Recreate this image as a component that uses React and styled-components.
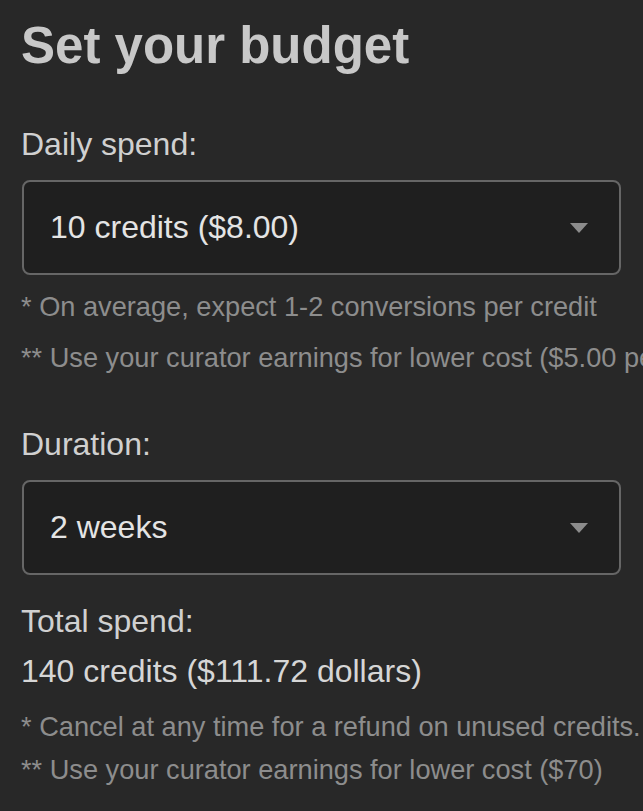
import React from "react"
import styled, { createGlobalStyle } from 'styled-components'

const GlobalStyle = createGlobalStyle`
  html, body {
    margin: 0;
    padding: 0;
    background: #282828;
    overflow-x: hidden;
  }
  body {
    font-family: "Liberation Sans", Arial, sans-serif;
  }
`

const Page = styled.div`
  padding: 16px 22px 30px 21px;
  min-height: 811px;
  box-sizing: border-box;
  background: #282828;
  overflow: hidden;
`

const Title = styled.h1`
  margin: 0 0 48px;
  font-size: 51px;
  line-height: 60px;
  font-weight: 700;
  color: #c8c8c8;
  white-space: nowrap;
`

const Label = styled.div`
  font-size: 32px;
  line-height: 40px;
  color: #d0d0d0;
  white-space: nowrap;
  margin-top: ${props => props.gap || 0}px;
`

const SelectBox = styled.div`
  display: flex;
  align-items: center;
  justify-content: space-between;
  height: 95px;
  box-sizing: border-box;
  margin: 16px 0 0 1px;
  padding: 0 30px 0 26px;
  border: 2px solid #666;
  border-radius: 8px;
  background: #1f1f1f;
  color: #e4e4e4;
  font-size: 32px;
  cursor: pointer;
`

const Caret = styled.svg`
  width: 20px;
  height: 10px;
  flex: none;
`

const Note = styled.div`
  font-size: 27.2px;
  line-height: 36px;
  color: #8d8d8d;
  white-space: nowrap;
  margin-top: ${props => props.gap || 0}px;
`

const Total = styled.div`
  font-size: 32px;
  line-height: 40px;
  color: #d6d6d6;
  white-space: nowrap;
  margin-top: 10px;
`

function Select({ value }) {
  return (
    <SelectBox role="button">
      <span>{value}</span>
      <Caret viewBox="0 0 20 10">
        <path d="M1 0 L19 0 L10 10 Z" fill="#8c8c8c" />
      </Caret>
    </SelectBox>
  )
}

export default function App() {
  return (
    <Page>
      <GlobalStyle />
      <Title>Set your budget</Title>

      <Label>Daily spend:</Label>
      <Select value="10 credits ($8.00)" />
      <Note gap={14}>* On average, expect 1-2 conversions per credit</Note>
      <Note gap={15}>** Use your curator earnings for lower cost ($5.00 per credit)</Note>

      <Label gap={48}>Duration:</Label>
      <Select value="2 weeks" />

      <Label gap={26}>Total spend:</Label>
      <Total>140 credits ($111.72 dollars)</Total>
      <Note gap={18}>* Cancel at any time for a refund on unused credits.</Note>
      <Note gap={7}>** Use your curator earnings for lower cost ($70)</Note>
    </Page>
  )
}
